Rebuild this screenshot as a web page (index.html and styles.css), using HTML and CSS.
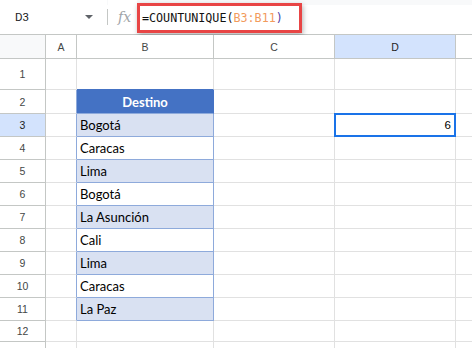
FILE: index.html
```html
<!DOCTYPE html>
<html>
<head>
<meta charset="utf-8">
<link rel="stylesheet" href="styles.css">
</head>
<body>
<div class="fbar">
  <div class="namebox"><span class="nb-text">D3</span><span class="caret"></span></div>
  <div class="sep"></div>
  <div class="fx">fx</div>
  <div class="formula"><span class="f-fn">=COUNTUNIQUE(</span><span class="f-rng">B3:B11</span><span class="f-par">)</span></div>
</div>
<div class="sheet">
  <div class="rh corner"></div><div class="ch">A</div><div class="ch">B</div><div class="ch">C</div><div class="ch sel">D</div><div class="ch last"></div>

  <div class="rh">1</div><div class="c"></div><div class="c top-of-table"></div><div class="c"></div><div class="c"></div><div class="c last"></div>
  <div class="rh">2</div><div class="c edge"></div><div class="c th">Destino</div><div class="c"></div><div class="c"></div><div class="c last"></div>
  <div class="rh sel">3</div><div class="c edge"></div><div class="c t alt">Bogotá</div><div class="c"></div><div class="c active">6</div><div class="c last"></div>
  <div class="rh">4</div><div class="c edge"></div><div class="c t">Caracas</div><div class="c"></div><div class="c"></div><div class="c last"></div>
  <div class="rh">5</div><div class="c edge"></div><div class="c t alt">Lima</div><div class="c"></div><div class="c"></div><div class="c last"></div>
  <div class="rh">6</div><div class="c edge"></div><div class="c t">Bogotá</div><div class="c"></div><div class="c"></div><div class="c last"></div>
  <div class="rh">7</div><div class="c edge"></div><div class="c t alt">La Asunción</div><div class="c"></div><div class="c"></div><div class="c last"></div>
  <div class="rh">8</div><div class="c edge"></div><div class="c t">Cali</div><div class="c"></div><div class="c"></div><div class="c last"></div>
  <div class="rh">9</div><div class="c edge"></div><div class="c t alt">Lima</div><div class="c"></div><div class="c"></div><div class="c last"></div>
  <div class="rh">10</div><div class="c edge"></div><div class="c t">Caracas</div><div class="c"></div><div class="c"></div><div class="c last"></div>
  <div class="rh">11</div><div class="c edge"></div><div class="c t alt">La Paz</div><div class="c"></div><div class="c"></div><div class="c last"></div>
  <div class="rh">12</div><div class="c"></div><div class="c"></div><div class="c"></div><div class="c"></div><div class="c last"></div>
  <div class="rh">13</div><div class="c"></div><div class="c"></div><div class="c"></div><div class="c"></div><div class="c last"></div>
</div>
</body>
</html>
```

FILE: styles.css
```css
* { box-sizing: border-box; }
html, body { margin: 0; padding: 0; background: #fff; overflow: hidden; }
body { width: 472px; height: 348px; font-family: "Liberation Sans", Arial, sans-serif; }

.fbar {
  height: 34px;
  display: flex;
  align-items: center;
  background: linear-gradient(#f8f9fa 0 5px, #fff 5px);
}
.namebox {
  width: 107px;
  height: 100%;
  display: flex;
  align-items: center;
  padding-left: 15px;
  padding-right: 14px;
  background: #fff;
}
.nb-text { font-family: Roboto, "Liberation Sans", sans-serif; font-size: 11.5px; color: #202124; }
.caret {
  margin-left: auto;
  width: 0; height: 0;
  border-left: 4px solid transparent;
  border-right: 4px solid transparent;
  border-top: 4px solid #5f6368;
}
.sep { width: 1px; height: 16px; background: #c4c7c5; }
.fx {
  width: 29px;
  height: 100%;
  display: flex;
  align-items: center;
  padding-left: 10px;
  font-family: "DejaVu Serif", serif;
  font-style: italic;
  font-size: 14px;
  color: #a0a4a8;
  background: #fff;
}
.formula {
  align-self: flex-start;
  margin-top: 3px;
  width: 165px;
  height: 30px;
  border: 3px solid #e84545;
  box-shadow: 1px 2px 5px rgba(0,0,0,0.3);
  display: flex;
  align-items: center;
  padding-left: 2px;
  font-family: "DejaVu Sans Mono", "Liberation Mono", monospace;
  font-size: 11.7px;
  background: #fff;
  white-space: nowrap;
}
.f-fn { color: #111; }
.f-rng { color: #f29b5c; }
.f-par { color: #4b3aa6; }

.sheet {
  display: grid;
  grid-template-columns: 46px 31px 137px 121px 121px 1fr;
  grid-template-rows: 24px 31px 24px repeat(9, 23px) 21px 23px;
  border-top: 1px solid #c4c7c5;
}
.sheet > div {
  display: flex;
  align-items: center;
  min-width: 0;
  overflow: hidden;
  white-space: nowrap;
}
.rh, .ch {
  justify-content: center;
  font-family: "Liberation Sans", Arial, sans-serif;
  font-size: 10.5px;
  color: #444746;
  border-right: 1px solid #c4c7c5;
  border-bottom: 1px solid #c4c7c5;
  background: #fff;
}
.corner { background: #f8f9fa; }
.ch.last { border-right: none; }
.sel { background: #d3e3fd; color: #0b57d0; }
.ch.sel { color: #1f1f1f; }
.rh.sel { color: #1f1f1f; }

.c {
  border-right: 1px solid #e1e1e1;
  border-bottom: 1px solid #e1e1e1;
}
.c.last { border-right: none; }
.edge { border-right-color: #8eaadb; }
.top-of-table { border-bottom-color: #4472c4; }
.th {
  background: #4472c4;
  color: #fff;
  font-family: Lato, "Open Sans", sans-serif;
  font-weight: bold;
  font-size: 13px;
  justify-content: center;
  border-right-color: #4472c4;
  border-bottom-color: #8eaadb;
}
.t {
  font-family: Lato, "Open Sans", sans-serif;
  font-size: 13px;
  color: #000;
  padding-left: 3px;
  border-right-color: #8eaadb;
  border-bottom-color: #8eaadb;
}
.alt { background: #d9e1f2; }
.active {
  position: relative;
  overflow: visible !important;
  justify-content: flex-end;
  padding-right: 4px;
  font-family: "Liberation Sans", Arial, sans-serif;
  font-size: 11.5px;
  color: #000;
}
.active::after {
  content: "";
  position: absolute;
  top: -1px; left: -1px; right: -1px; bottom: -1px;
  border: 2px solid #1a73e8;
}
```
